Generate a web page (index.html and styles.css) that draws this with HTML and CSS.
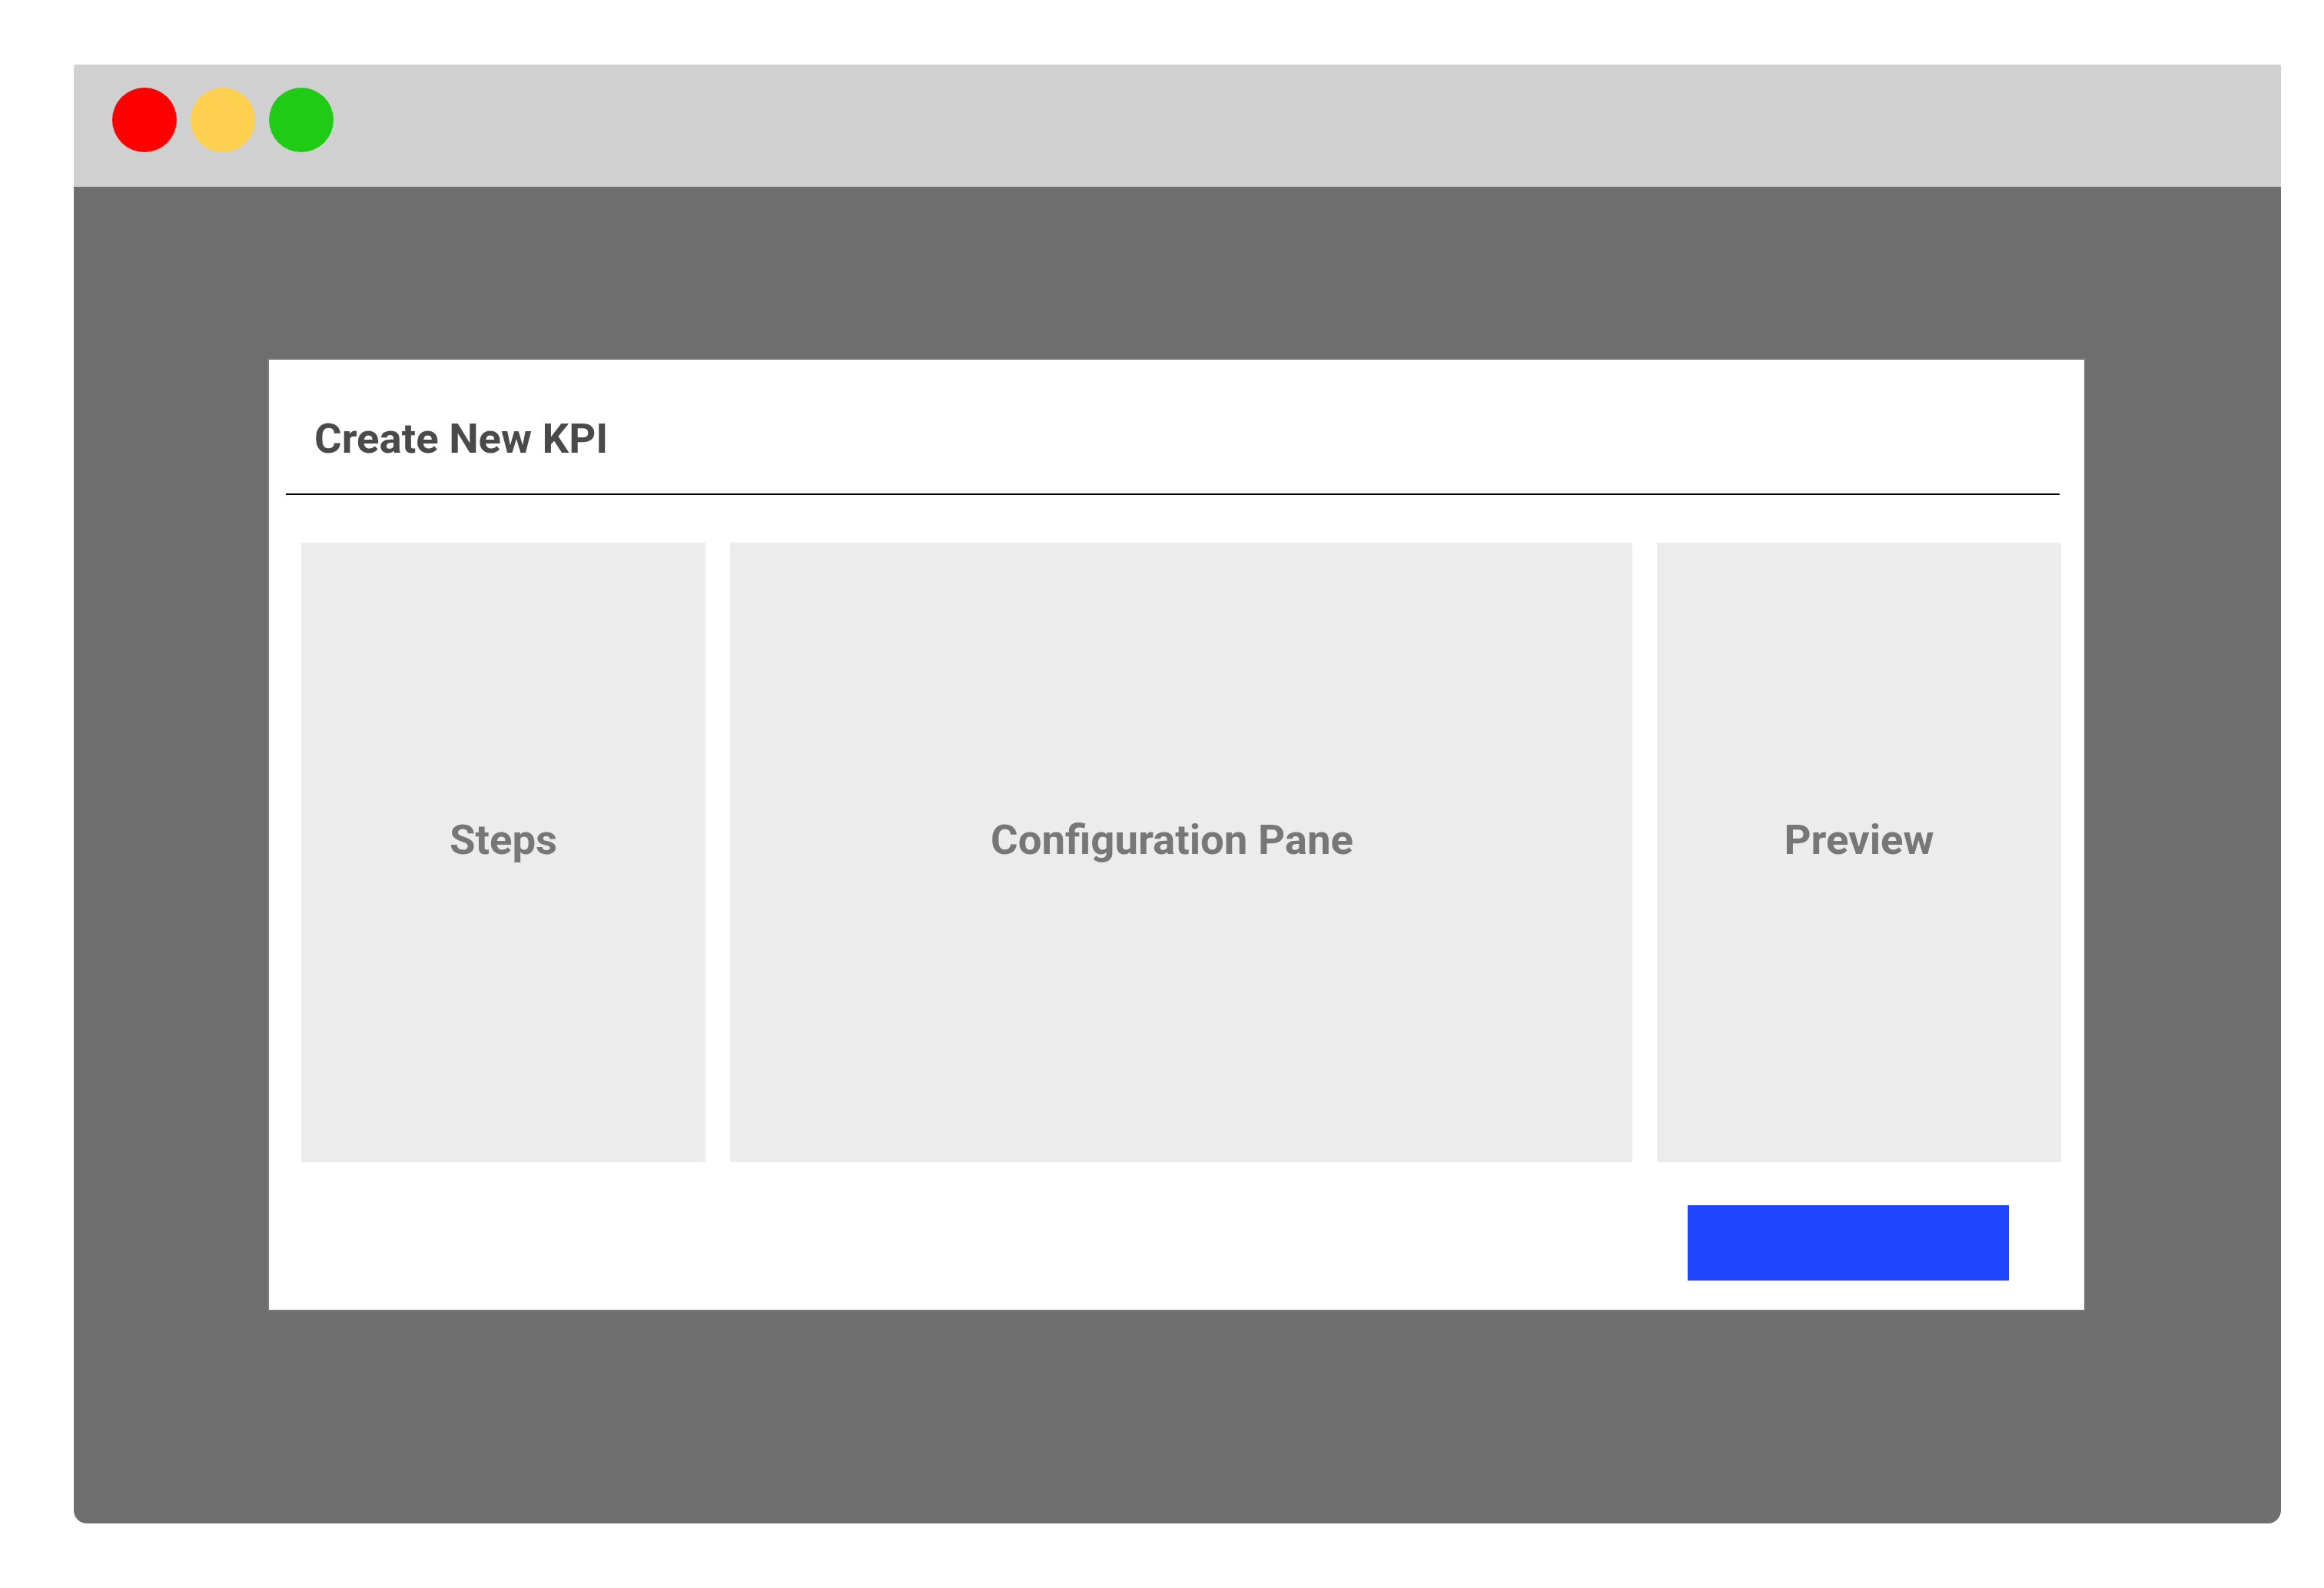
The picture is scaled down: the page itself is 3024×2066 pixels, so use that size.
FILE: index.html
```html
<!DOCTYPE html>
<html lang="en">
<head>
  <meta charset="UTF-8" />
  <title>Create New KPI</title>
  <link rel="stylesheet" href="styles.css">
</head>
<body>
  <div class="window">
    <div class="titlebar">
      <span class="dot red"></span>
      <span class="dot yellow"></span>
      <span class="dot green"></span>
    </div>

    <div class="window-body">
      <div class="dialog">
        <div class="dialog-header">
          <h1>Create New KPI</h1>
        </div>

        <div class="panes">
          <div class="pane side">Steps</div>
          <div class="pane main">Configuration Pane</div>
          <div class="pane side">Preview</div>
        </div>

        <div class="dialog-footer">
          <button class="primary-btn"></button>
        </div>
      </div>
    </div>
  </div>
</body>
</html>
```

FILE: styles.css
```css
:root {
  --chrome: #d0d0d0;
  --backdrop: #6e6e6e;
  --pane-bg: #ececec;
  --pane-text: #777;
  --title-text: #4a4a4a;
  --accent: #1f45fe;
}

* {
  margin: 0;
  padding: 0;
  box-sizing: border-box;
}

body {
  background: #fff;
  font-family: Roboto, 'Liberation Sans', sans-serif;
}

/* Fake browser window */
.window {
  width: 2872px;
  height: 1898px;
  margin: 84px 0 0 96px;
  display: flex;
  flex-direction: column;
  border-radius: 2px 2px 17px 17px;
  overflow: hidden;
}

.titlebar {
  height: 159px;
  flex-shrink: 0;
  background: var(--chrome);
  display: flex;
  align-items: flex-start;
  gap: 18px;
  padding: 30px 0 0 50px;
}

.dot {
  width: 84px;
  height: 84px;
  border-radius: 50%;
}

.dot.red { background: #fe0000; }
.dot.yellow { background: #fed050; }
.dot.green { background: #20cb15; }

.window-body {
  flex: 1;
  background: var(--backdrop);
  padding: 223px 0 0 252px;
}

/* Modal */
.dialog {
  width: 2366px;
  background: #fff;
  border: 2px solid #7a7a7a;
  padding: 0 30px 38px 22px;
}

.dialog-header {
  padding: 69px 0 39px 37px;
  margin-right: 2px;
  border-bottom: 2px solid #000;
}

.dialog-header h1 {
  font-size: 54.5px;
  font-weight: 700;
  line-height: 66px;
  color: var(--title-text);
}

.panes {
  display: flex;
  gap: 32px;
  margin: 62px 0 0 20px;
  height: 806px;
}

.pane {
  background: var(--pane-bg);
  color: var(--pane-text);
  font-size: 54.5px;
  font-weight: 700;
  display: flex;
  align-items: center;
  justify-content: center;
  padding-bottom: 34px;
}

.pane.side { width: 526px; }
.pane.main {
  width: 1174px;
  padding-right: 24px;
}

.dialog-footer {
  display: flex;
  justify-content: flex-end;
  margin-top: 56px;
  padding-right: 68px;
}

.primary-btn {
  width: 418px;
  height: 98px;
  background: var(--accent);
  border: none;
}
```
